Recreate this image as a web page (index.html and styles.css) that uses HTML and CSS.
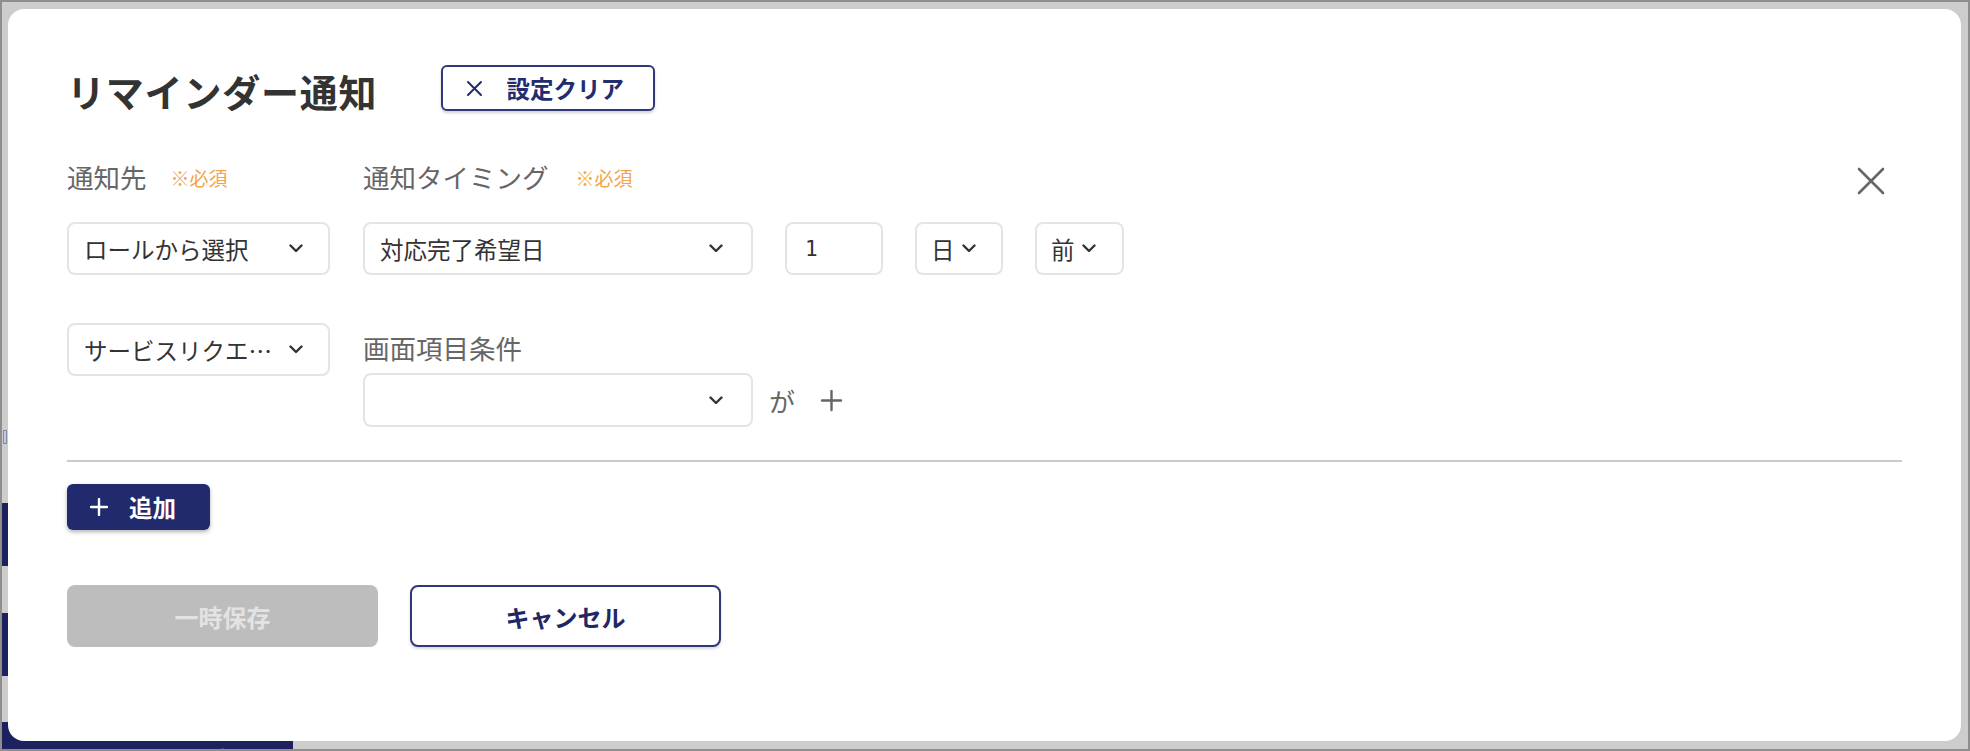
FILE: index.html
```html
<!DOCTYPE html>
<html lang="ja">
<head>
<meta charset="utf-8">
<title>リマインダー通知</title>
<link rel="stylesheet" href="styles.css">
</head>
<body>
<div class="screen">
  <div class="behind">
    <div class="bg-icon"></div>
    <div class="bg-tab bg-tab-a"></div>
    <div class="bg-tab bg-tab-b"></div>
    <div class="bg-bar"><span>タイムライン通知</span></div>
  </div>

  <div class="dialog">
    <div class="header">
      <h1 class="title">リマインダー通知</h1>
      <button class="btn-clear">
        <svg width="17" height="17" viewBox="0 0 17 17"><path d="M2 2 L15 15 M15 2 L2 15" stroke="#232c6e" stroke-width="2" stroke-linecap="round" fill="none"/></svg>
        <span>設定クリア</span>
      </button>
    </div>

    <div class="form-top">
      <div class="fields">
        <div class="row">
          <div class="col-target">
            <div class="label">通知先<span class="req">※必須</span></div>
            <div class="select w-target">
              <span class="sel-text">ロールから選択</span>
              <svg class="chev" width="14" height="9" viewBox="0 0 14 9"><path d="M1.5 1.5 L7 7 L12.5 1.5" stroke="#333" stroke-width="2.4" fill="none" stroke-linecap="round" stroke-linejoin="round"/></svg>
            </div>
          </div>
          <div class="col-timing">
            <div class="label">通知タイミング<span class="req req-wide">※必須</span></div>
            <div class="timing-row">
              <div class="select w-wide">
                <span class="sel-text">対応完了希望日</span>
                <svg class="chev chev-r" width="14" height="9" viewBox="0 0 14 9"><path d="M1.5 1.5 L7 7 L12.5 1.5" stroke="#333" stroke-width="2.4" fill="none" stroke-linecap="round" stroke-linejoin="round"/></svg>
              </div>
              <div class="input-num">1</div>
              <div class="select small unit-day">
                <span class="sel-text">日</span>
                <svg class="chev" width="14" height="9" viewBox="0 0 14 9"><path d="M1.5 1.5 L7 7 L12.5 1.5" stroke="#333" stroke-width="2.4" fill="none" stroke-linecap="round" stroke-linejoin="round"/></svg>
              </div>
              <div class="select small unit-dir">
                <span class="sel-text">前</span>
                <svg class="chev" width="14" height="9" viewBox="0 0 14 9"><path d="M1.5 1.5 L7 7 L12.5 1.5" stroke="#333" stroke-width="2.4" fill="none" stroke-linecap="round" stroke-linejoin="round"/></svg>
              </div>
            </div>
          </div>
        </div>

        <div class="row row2">
          <div class="select w-target">
            <span class="sel-text">サービスリクエ…</span>
            <svg class="chev" width="14" height="9" viewBox="0 0 14 9"><path d="M1.5 1.5 L7 7 L12.5 1.5" stroke="#333" stroke-width="2.4" fill="none" stroke-linecap="round" stroke-linejoin="round"/></svg>
          </div>
          <div class="col-cond">
            <div class="label label-cond">画面項目条件</div>
            <div class="cond-row">
              <div class="select w-wide">
                <span class="sel-text"></span>
                <svg class="chev chev-r" width="14" height="9" viewBox="0 0 14 9"><path d="M1.5 1.5 L7 7 L12.5 1.5" stroke="#333" stroke-width="2.4" fill="none" stroke-linecap="round" stroke-linejoin="round"/></svg>
              </div>
              <span class="ga">が</span>
              <svg class="plus-grey" width="23" height="23" viewBox="0 0 23 23"><path d="M11.5 2 V21 M2 11.5 H21" stroke="#666" stroke-width="2.4" stroke-linecap="round" fill="none"/></svg>
            </div>
          </div>
        </div>
      </div>
      <button class="close" aria-label="閉じる">
        <svg width="28" height="28" viewBox="0 0 28 28"><path d="M2 2 L26 26 M26 2 L2 26" stroke="#666" stroke-width="2.6" stroke-linecap="round" fill="none"/></svg>
      </button>
    </div>

    <div class="divider"></div>

    <button class="btn-add">
      <svg width="18" height="18" viewBox="0 0 18 18"><path d="M9 1 V17 M1 9 H17" stroke="#fff" stroke-width="2.4" stroke-linecap="round" fill="none"/></svg>
      <span>追加</span>
    </button>

    <div class="footer">
      <button class="btn-save" disabled>一時保存</button>
      <button class="btn-cancel">キャンセル</button>
    </div>
  </div>
</div>
</body>
</html>
```

FILE: styles.css
```css
* { box-sizing: border-box; }

html, body {
  margin: 0;
  padding: 0;
  width: 1970px;
  height: 751px;
  overflow: hidden;
  font-family: "Noto Sans CJK JP", "Noto Sans", sans-serif;
}

.screen {
  position: relative;
  width: 1970px;
  height: 751px;
  border: 2px solid #8e8e8e;
  background: #cdcdcd;
  overflow: hidden;
}

.behind {
  position: absolute;
  inset: 0;
}

.bg-icon {
  position: absolute;
  left: 1px;
  top: 428px;
  width: 4px;
  height: 14px;
  border: 1px solid #7d8aa6;
  background: #c3cad8;
}

.bg-tab {
  position: absolute;
  left: 0;
  width: 8px;
  background: #1d215e;
}
.bg-tab-a { top: 501px; height: 63px; }
.bg-tab-b { top: 611px; height: 63px; }

.bg-bar {
  position: absolute;
  left: 0;
  top: 720px;
  width: 291px;
  height: 40px;
  background: #1d215e;
  color: #c9cce0;
  font-size: 24px;
  padding-left: 50px;
  padding-top: 22px;
  overflow: hidden;
}
.bg-bar span { display: block; line-height: 30px; }

.dialog {
  position: absolute;
  left: 6px;
  top: 7px;
  width: 1953px;
  height: 732px;
  background: #fff;
  border-radius: 16px;
  padding: 56px 59px 0 59px;
}

.header {
  display: flex;
  align-items: center;
  height: 46px;
}

.title {
  margin: 0;
  font-size: 38px;
  line-height: 46px;
  font-weight: 700;
  color: #333;
  letter-spacing: 0.8px;
  position: relative;
  top: 3px;
}

.btn-clear {
  margin-left: 64px;
  height: 46px;
  width: 214px;
  display: flex;
  align-items: center;
  padding: 0 0 0 23px;
  gap: 23px;
  border: 2px solid #2f3878;
  border-radius: 6px;
  background: #fff;
  color: #232c6e;
  font-family: inherit;
  font-size: 23.5px;
  font-weight: 700;
  box-shadow: 0 2px 3px rgba(0,0,0,0.18);
}

.form-top {
  display: flex;
  align-items: flex-start;
  margin-top: 48px;
}

.fields { flex: 1; }

.row {
  display: flex;
  align-items: flex-start;
  gap: 33px;
}

.col-target { display: flex; flex-direction: column; }
.col-timing { display: flex; flex-direction: column; }

.label {
  height: 36px;
  line-height: 36px;
  font-size: 26.5px;
  color: #666;
  margin-bottom: 27px;
  white-space: nowrap;
}

.req {
  font-size: 19px;
  color: #f3a447;
  margin-left: 24px;
  position: relative;
  top: -2px;
}
.req-wide { margin-left: 27px; }

.timing-row {
  display: flex;
  gap: 32px;
}

.select {
  height: 53px;
  border: 2px solid #e4e4e4;
  border-radius: 8px;
  background: #fff;
  display: flex;
  align-items: center;
  padding: 0 25px 0 15px;
  font-size: 23.5px;
  color: #333;
}

.w-target { width: 263px; }
.w-wide { width: 390px; }

.sel-text { white-space: nowrap; }

.chev { margin-left: auto; flex: none; }
.chev-r { margin-right: 3px; }

.select.small {
  padding: 0 20px 0 14px;
  gap: 7px;
}
.select.small .chev { margin-left: 0; }
.unit-day { width: 88px; }
.unit-dir { width: 89px; }

.input-num {
  width: 98px;
  height: 53px;
  border: 2px solid #e4e4e4;
  border-radius: 8px;
  display: flex;
  align-items: center;
  padding-left: 18px;
  font-family: "DejaVu Sans Mono", "Liberation Mono", monospace;
  font-size: 21px;
  color: #333;
}

.row2 { margin-top: 48px; }

.col-cond { display: flex; flex-direction: column; }

.label-cond {
  height: 50px;
  line-height: 50px;
  margin-bottom: 0;
}

.cond-row {
  display: flex;
  align-items: center;
  height: 54px;
}
.cond-row .select { height: 54px; }

.ga {
  font-size: 26px;
  color: #666;
  margin-left: 16px;
}

.plus-grey { margin-left: 25px; }

.close {
  margin-top: 8px;
  margin-right: 17px;
  padding: 0;
  border: 0;
  background: none;
  width: 28px;
  height: 28px;
  display: block;
}
.close svg { display: block; }

.divider {
  margin-top: 33px;
  height: 2px;
  background: #cbcbcb;
}

.btn-add {
  margin-top: 22px;
  width: 143px;
  height: 46px;
  border: 0;
  border-radius: 6px;
  background: #222a6e;
  color: #fff;
  font-family: inherit;
  font-size: 23.5px;
  font-weight: 700;
  display: flex;
  align-items: center;
  padding: 0 0 0 23px;
  gap: 21px;
  box-shadow: 0 2px 4px rgba(0,0,0,0.3);
}

.footer {
  display: flex;
  gap: 32px;
  margin-top: 55px;
}

.btn-save, .btn-cancel {
  width: 311px;
  height: 62px;
  border-radius: 8px;
  font-family: inherit;
  font-size: 24px;
  font-weight: 700;
}

.btn-save {
  border: 0;
  background: #bdbdbd;
  color: #e3e3e3;
}

.btn-cancel {
  background: #fff;
  border: 2px solid #2f3878;
  color: #1f2766;
  box-shadow: 0 2px 3px rgba(0,0,0,0.15);
}
```
